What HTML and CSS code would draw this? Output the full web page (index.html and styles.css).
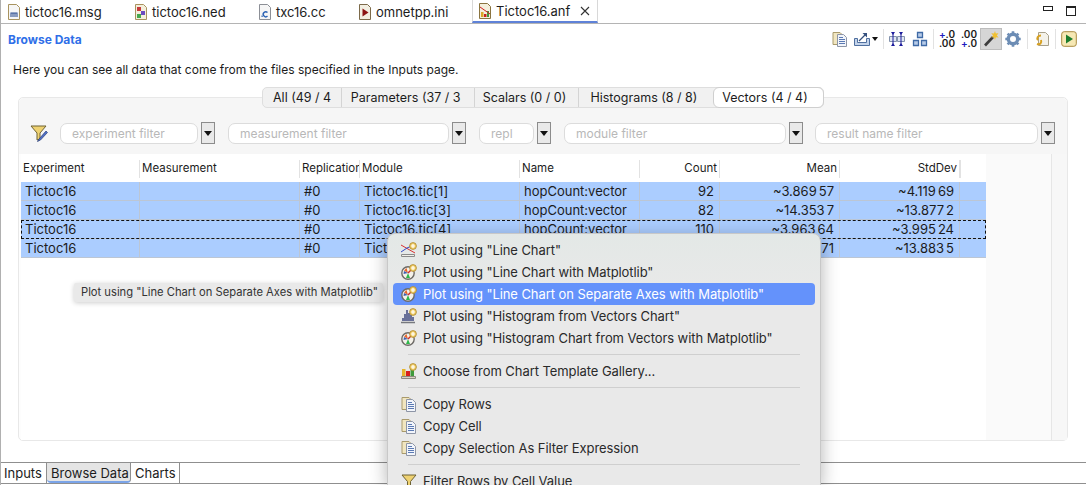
FILE: index.html
```html
<!DOCTYPE html>
<html lang="en">
<head>
  <meta charset="UTF-8" />
  <title>Tictoc16.anf</title>
  <link rel="stylesheet" href="styles.css">
</head>
<body>

  <svg class="defs" width="0" height="0">
    <symbol id="i-copy" viewBox="0 0 16 16">
      <path d="M1 1.5h7l2 2v10H1z" fill="#f1e6c0" stroke="#a99a6c"/>
      <path d="M5.5 3.5h6l3 3v9h-9z" fill="#f2f5fb" stroke="#8d95a6"/>
      <path d="M7 6.5h4M7 8.5h6M7 10.5h6M7 12.5h6" stroke="#5b7ab4"/>
    </symbol>
    <symbol id="i-badge" viewBox="0 0 8 8">
      <circle cx="4" cy="4" r="3.4" fill="#f3d06c" stroke="#a8842a" stroke-width=".8"/>
      <path d="M4 2v4M2 4h4" stroke="#fff" stroke-width="1.2"/>
    </symbol>
    <symbol id="i-matplot" viewBox="0 0 16 16">
      <circle cx="7" cy="9" r="6.2" fill="#f4f1ea" stroke="#6d6a66" stroke-width="1.4"/>
      <path d="M7 9 3 6.5 5.5 4z" fill="#e8672c"/>
      <path d="M7 9 5 14h4z" fill="#2fb84c"/>
      <path d="M7 9 2.5 10 3 7z" fill="#3f5fb0"/>
      <path d="M7 9 11 5" stroke="#d02c2c" stroke-width="1.4"/>
      <use href="#i-badge" x="8" y="0" width="8" height="8"/>
    </symbol>
    <symbol id="i-line" viewBox="0 0 16 16">
      <path d="M0 3 14 11" stroke="#d93030" fill="none"/>
      <path d="M0 10 6 6l7-3" stroke="#3048c8" fill="none"/>
      <path d="M.5 12.5h13v2H.5z" fill="#f0eee8" stroke="#8a8a8a"/>
      <use href="#i-badge" x="8" y="0" width="8" height="8"/>
    </symbol>
    <symbol id="i-hist" viewBox="0 0 16 16">
      <path d="M2 13V10M4 13V6M6 13V2M8 13V5M10 13V7M12 13V9" stroke="#26306e" stroke-width="1.3"/>
      <path d="M0 14.5h14" stroke="#77797e" stroke-width="1.5"/>
      <use href="#i-badge" x="8" y="0" width="8" height="8"/>
    </symbol>
    <symbol id="i-gallery" viewBox="0 0 16 16">
      <path d="M1 6h3.500v7H1z" fill="#e7b52a"/>
      <path d="M5 8h4v5H5z" fill="#d8201c"/>
      <path d="M9.500 4H13v9H9.500z" fill="#3f9a3c"/>
      <path d="M.5 13.500h14v2H.5z" fill="#d8d4c4" stroke="#8c8a80"/>
      <use href="#i-badge" x="8" y="0" width="8" height="8"/>
    </symbol>
  </svg>

  <div class="editor-tabs">
    <div class="editor-tab">
      <svg class="tab-icon" viewBox="1 0 12 16"><path d="M1.500.5h8l3 3v12h-11z" fill="#f6f6f6" stroke="#a8935f"/><path d="M4 13V9h6v4M6 9v4M8 9v4" fill="none" stroke="#2e4f92" stroke-width="1.100"/></svg>
      <span>tictoc16.msg</span>
    </div>
    <div class="editor-tab">
      <svg class="tab-icon" viewBox="1 0 12 16"><path d="M1.500.5h8l3 3v12h-11z" fill="#f4efdc" stroke="#a8935f"/><path d="M3 3h4v4H3z" fill="#c83a3a"/><path d="M7 7h4v4H7z" fill="#6a4cc0"/><path d="M3 10h4v4H3z" fill="#45a84c"/></svg>
      <span>tictoc16.ned</span>
    </div>
    <div class="editor-tab">
      <svg class="tab-icon" viewBox="1 0 12 16"><path d="M1.500.5h8l3 3v12h-11z" fill="#f6f6f6" stroke="#8c8f96"/><path d="M9.500 8.500a2.500 2.500 0 1 0 0 3.600" fill="none" stroke="#2b62b4" stroke-width="1.400"/><path d="M3.500 11.500h1.200v1.500H3.500z" fill="#2b62b4"/></svg>
      <span>txc16.cc</span>
    </div>
    <div class="editor-tab">
      <svg class="tab-icon" viewBox="1 0 12 16"><path d="M1.500.5h8l3 3v12h-11z" fill="#f3efe2" stroke="#7c6a4a"/><path d="M4.500 4.500l6 4-6 4z" fill="#8c1414"/></svg>
      <span>omnetpp.ini</span>
    </div>
    <div class="editor-tab active">
      <svg class="tab-icon" viewBox="1 0 12 16"><path d="M1.500.5h8l3 3v12h-11z" fill="#f4efdc" stroke="#8a7440"/><path d="M3 9h2.500v5H3z" fill="#d8a828"/><path d="M6 11h2.500v3H6z" fill="#c82020"/><path d="M9 8h2v6H9z" fill="#3f9a3c"/><path d="M2 4l10 7" stroke="#d02020"/></svg>
      <span>Tictoc16.anf</span>
      <svg class="tab-close" viewBox="0 0 10 10"><path d="M1 1l8 8M9 1 1 9" stroke="#333" stroke-width="1.100"/></svg>
    </div>
    <div class="window-btns">
      <span class="win-min"></span>
      <span class="win-max"></span>
    </div>
  </div>

  <div class="page-head">
    <div class="page-title">Browse Data</div>
    <div class="toolbar">
      <svg class="tool"><use href="#i-copy"/></svg>
      <svg class="tool tool-export" viewBox="0 0 18 16"><path d="M1.500 7.500h3v4h9v-4h3v7h-15z" fill="#c3d3ea" stroke="#4f6f9f"/><path d="M6 10 13 3" stroke="#36507e" stroke-width="1.300"/><path d="M9.500 2H14v4.500z" fill="#36507e"/></svg>
      <span class="tool-arrow"></span>
      <span class="tool-sep"></span>
      <svg class="tool" viewBox="0 0 16 16"><path d="M.5 5.500h7v5h-7zM8.500 5.500h7v5h-7z" fill="#dfe6f2" stroke="#8392ac"/><path d="M2 1h4L4 4zM10 1h4l-2 3zM2 15h4l-2-3zM10 15h4l-2-3z" fill="#1c1c9c"/><path d="M4 1v14M12 1v14" stroke="#1c1c9c"/></svg>
      <svg class="tool tool-tree" viewBox="0 0 16 16"><path d="M5.500 1.500h5v5h-5zM1.500 9.500h5v5h-5zM9.500 9.500h5v5h-5z" fill="#b7cbe8" stroke="#3f6aa6" stroke-width="1.300"/></svg>
      <span class="tool-sep"></span>
      <span class="tool-num first"><b><em>+</em>.0</b><b>.00</b></span>
      <span class="tool-num"><b>.00</b><b><em>+</em>.0</b></span>
      <span class="tool-on">
        <svg class="tool" viewBox="0 0 16 16"><path d="M2 14.500 10 6" stroke="#3c3c3c" stroke-width="2.600"/><path d="M12 0l.8 2.500 2.700-.3-1.700 2.200 1.700 2.200-2.700-.3L12 9l-1-2.700-2.700.3 1.800-2.200-1.800-2.200 2.700.3z" fill="#f0c030"/></svg>
      </span>
      <svg class="tool tool-gear" viewBox="0 0 16 16"><circle cx="8" cy="8" r="4.700" fill="none" stroke="#6d8db5" stroke-width="3.400"/><path d="M8 .3v3M8 12.700v3M.3 8h3M12.700 8h3M2.600 2.600l2.100 2.100M11.300 11.300l2.100 2.100M13.400 2.600l-2.100 2.100M4.700 11.300l-2.100 2.100" stroke="#6d8db5" stroke-width="2.600"/></svg>
      <span class="tool-sep"></span>
      <svg class="tool tool-refresh" viewBox="0 0 16 16"><path d="M4.500 1.500h7l3 3v10h-10z" fill="#f4f2ea" stroke="#a8a08a"/><path d="M7 4.500C3.500 4.500 2.500 7.500 4 9M3 13c3 1 5-1 4-4" fill="none" stroke="#d8a020" stroke-width="2"/></svg>
      <span class="tool-sep"></span>
      <svg class="tool" viewBox="0 0 16 16"><rect x=".7" y=".7" width="14.600" height="14.600" rx="2.500" fill="#f6e8b4" stroke="#a88a40"/><path d="M5 3.500l7 4.500-7 4.500z" fill="#1c7c2c"/></svg>
    </div>
  </div>

  <p class="page-help">Here you can see all data that come from the files specified in the Inputs page.</p>

  <div class="panel">
    <div class="panel-top">
      <div class="folder-tabs">
        <div class="folder-tab seg-all">All (49 / 4</div>
        <div class="folder-tab seg-par">Parameters (37 / 3</div>
        <div class="folder-tab seg-sca">Scalars (0 / 0)</div>
        <div class="folder-tab seg-his">Histograms (8 / 8)</div>
        <div class="folder-tab seg-vec">Vectors (4 / 4)</div>
      </div>
      <div class="filters">
        <svg class="filter-icon" viewBox="0 0 18 18"><path d="M1 2h15l-6 7v6l-3 1V9z" fill="#efd272" stroke="#6e6232"/><path d="M16 7 9 15l-1.500 2.500L10.500 16l7-7.500z" fill="#4f70c8" stroke="#2c3f78" stroke-width=".7"/></svg>
        <div class="filter f-exp"><span class="filter-input">experiment filter</span><span class="filter-drop"></span></div>
        <div class="filter f-mea"><span class="filter-input">measurement filter</span><span class="filter-drop"></span></div>
        <div class="filter f-rep"><span class="filter-input">repl</span><span class="filter-drop"></span></div>
        <div class="filter f-mod"><span class="filter-input">module filter</span><span class="filter-drop"></span></div>
        <div class="filter f-res"><span class="filter-input">result name filter</span><span class="filter-drop"></span></div>
      </div>
    </div>

    <div class="panel-body">
      <div class="table">
        <div class="row head">
          <div>Experiment</div><div>Measurement</div><div>Replication</div><div>Module</div><div>Name</div>
          <div class="num">Count</div><div class="num">Mean</div><div class="num">StdDev</div><div class="end"></div>
        </div>
        <div class="row sel">
          <div>Tictoc16</div><div></div><div>#0</div><div>Tictoc16.tic[1]</div><div>hopCount:vector</div>
          <div class="num">92</div><div class="num">~3.869<i>57</i></div><div class="num">~4.119<i>69</i></div><div class="end"></div>
        </div>
        <div class="row sel">
          <div>Tictoc16</div><div></div><div>#0</div><div>Tictoc16.tic[3]</div><div>hopCount:vector</div>
          <div class="num">82</div><div class="num">~14.353<i>7</i></div><div class="num">~13.877<i>2</i></div><div class="end"></div>
        </div>
        <div class="row sel focus">
          <div>Tictoc16</div><div></div><div>#0</div><div>Tictoc16.tic[4]</div><div>hopCount:vector</div>
          <div class="num">110</div><div class="num">~3.963<i>64</i></div><div class="num">~3.995<i>24</i></div><div class="end"></div>
        </div>
        <div class="row sel">
          <div>Tictoc16</div><div></div><div>#0</div><div>Tict</div><div></div>
          <div class="num"></div><div class="num">71</div><div class="num">~13.883<i>5</i></div><div class="end"></div>
        </div>
      </div>
      <div class="panel-fill"></div>
      <div class="panel-scroll"></div>
    </div>
  </div>

  <div class="page-tabs">
    <div class="page-tab">Inputs</div>
    <div class="page-tab active">Browse Data</div>
    <div class="page-tab">Charts</div>
  </div>

  <div class="tooltip">Plot using "Line Chart on Separate Axes with Matplotlib"</div>

  <div class="menu">
    <div class="menu-item"><svg class="menu-icon"><use href="#i-line"/></svg>Plot using "Line Chart"</div>
    <div class="menu-item"><svg class="menu-icon"><use href="#i-matplot"/></svg>Plot using "Line Chart with Matplotlib"</div>
    <div class="menu-item hover"><svg class="menu-icon"><use href="#i-matplot"/></svg>Plot using "Line Chart on Separate Axes with Matplotlib"</div>
    <div class="menu-item"><svg class="menu-icon"><use href="#i-hist"/></svg>Plot using "Histogram from Vectors Chart"</div>
    <div class="menu-item"><svg class="menu-icon"><use href="#i-matplot"/></svg>Plot using "Histogram Chart from Vectors with Matplotlib"</div>
    <div class="menu-sep"></div>
    <div class="menu-item"><svg class="menu-icon"><use href="#i-gallery"/></svg>Choose from Chart Template Gallery...</div>
    <div class="menu-sep"></div>
    <div class="menu-item"><svg class="menu-icon"><use href="#i-copy"/></svg>Copy Rows</div>
    <div class="menu-item"><svg class="menu-icon"><use href="#i-copy"/></svg>Copy Cell</div>
    <div class="menu-item"><svg class="menu-icon"><use href="#i-copy"/></svg>Copy Selection As Filter Expression</div>
    <div class="menu-sep"></div>
    <div class="menu-item"><svg class="menu-icon" viewBox="0 0 16 16"><path d="M1 2h14L9.500 8.500V15h-3V8.500z" fill="#efd272" stroke="#6e6232"/></svg>Filter Rows by Cell Value</div>
  </div>

</body>
</html>
```

FILE: styles.css
```css
* {
  margin: 0;
  padding: 0;
  box-sizing: border-box;
}

html, body {
  height: 485px;
  overflow: hidden;
}

body {
  position: relative;
  font-family: Inter, "Liberation Sans", sans-serif;
  font-size: 13px;
  color: #1c1c1c;
  background: #fff;
  border-left: 1px solid #b0b0b0;
}

.defs {
  position: absolute;
}

/* editor tabs */
.editor-tabs {
  display: flex;
  height: 24px;
  border-bottom: 1px solid #b4b4b4;
  margin-left: -1px;
}

.editor-tab {
  display: flex;
  align-items: center;
  gap: 5px;
  height: 23px;
  padding-left: 8px;
  font-size: 13px;
}

.editor-tab:nth-child(1) { width: 127px; }
.editor-tab:nth-child(2) { width: 124px; }
.editor-tab:nth-child(3) { width: 100px; }
.editor-tab:nth-child(4) { width: 121px; }

.editor-tab.active {
  width: 126px;
  padding-left: 6px;
  border-bottom: 2px solid #5f82d8;
  border-left: 1px solid #d8d8d8;
  border-right: 1px solid #d8d8d8;
}

.tab-icon {
  width: 12px;
  height: 16px;
  flex: none;
}

.tab-close {
  width: 10px;
  height: 10px;
  margin-left: 5px;
}

.window-btns {
  display: flex;
  gap: 13px;
  margin-left: auto;
  padding: 6px 10px 0 0;
}

.win-min {
  width: 10px;
  height: 5px;
  border: 1px solid #222;
}

.win-max {
  width: 10px;
  height: 10px;
  border: 1px solid #222;
  border-top-width: 2px;
}

/* title and toolbar */
.page-head {
  display: flex;
  align-items: center;
  justify-content: space-between;
  height: 30px;
  padding: 0 9px 0 7px;
}

.page-title {
  font-size: 12px;
  font-weight: 700;
  color: #2f6fe8;
}

.toolbar {
  display: flex;
  align-items: center;
}

.tool {
  width: 16px;
  height: 16px;
  flex: none;
}

.tool-export {
  width: 18px;
  margin-left: 5px;
}

.tool-tree {
  margin-left: 7px;
}

.tool-gear {
  margin: 0 1px 0 3px;
}

.tool-refresh {
  margin-left: 1px;
}

.tool-arrow {
  width: 0;
  height: 0;
  margin-left: 1px;
  border-left: 3px solid transparent;
  border-right: 3px solid transparent;
  border-top: 4px solid #111;
}

.tool-sep {
  width: 1px;
  height: 20px;
  margin: 0 5px;
  background: #e2e2e2;
}

.tool-num {
  display: flex;
  flex-direction: column;
  align-items: center;
  width: 22px;
  font-size: 10px;
  line-height: 9px;
}

.tool-num.first {
  margin-left: -3px;
}

.tool-num b {
  font-weight: 600;
}

.tool-num em {
  font-style: normal;
  color: #1c1cc0;
}

.tool-on {
  display: flex;
  align-items: center;
  justify-content: center;
  width: 22px;
  height: 22px;
  background: #d6d6d6;
  border: 1px solid #bdbdbd;
}

.page-help {
  padding: 9px 0 0 12px;
  height: 33px;
  font-size: 12px;
  line-height: 14px;
}

/* the big panel */
.panel {
  width: 1050px;
  height: 344px;
  margin: 10px 0 0 17px;
  background: #fdfdfd;
  border: 1px solid #e8e8e8;
  border-radius: 5px;
}

.panel-top {
  display: flow-root;
  height: 56px;
  background: #f6f6f6;
  border-radius: 5px 5px 0 0;
}

.folder-tabs {
  display: flex;
  width: 562px;
  height: 21px;
  margin: -11px 0 0 243px;
  background: #f1f1f1;
  border: 1px solid #dedede;
  border-radius: 5px;
  font-size: 12.5px;
  line-height: 19px;
}

.folder-tab {
  white-space: nowrap;
  padding-left: 10px;
  border-right: 1px solid #d4d4d4;
  overflow: hidden;
}

.seg-all { width: 79px; }
.seg-par { width: 133px; padding-left: 9px; }
.seg-sca { width: 105px; padding-left: 8px; }
.seg-his { width: 134px; padding-left: 11px; border-right: 0; }

.seg-vec {
  width: 111px;
  padding-left: 8px;
  background: #fff;
  border: 1px solid #cfcfcf;
  border-radius: 6px;
  margin: -1px -1px -1px 0;
}

.filters {
  display: flex;
  align-items: center;
  height: 24px;
  margin-top: 13px;
  padding-left: 11px;
}

.filter-icon {
  width: 18px;
  height: 18px;
  flex: none;
  margin-right: 12px;
}

.filter {
  display: flex;
  align-items: center;
  gap: 3px;
}

.f-exp { width: 155px; margin-right: 13px; }
.f-mea { width: 238px; margin-right: 13px; }
.f-rep { width: 72px; margin-right: 13px; }
.f-mod { width: 239px; margin-right: 12px; }
.f-res { width: 240px; }

.filter-input {
  flex: 1;
  height: 21px;
  padding-left: 11px;
  font-size: 12px;
  line-height: 20px;
  color: #b8b8b8;
  background: #fff;
  border: 1px solid #dcdcdc;
  border-radius: 7px;
}

.filter-drop {
  position: relative;
  flex: none;
  width: 14px;
  height: 22px;
  background: #e9e9e9;
  border: 1px solid #8c8c8c;
}

.filter-drop::after {
  content: "";
  position: absolute;
  left: 2px;
  top: 8px;
  border-left: 4px solid transparent;
  border-right: 4px solid transparent;
  border-top: 5px solid #111;
}

.panel-body {
  display: flex;
  height: 286px;
  padding-left: 2px;
}

/* table */
.table {
  width: 965px;
  flex: none;
  background: #fff;
}

.row {
  display: grid;
  grid-template-columns: 119px 160px 60px 160px 120px 80px 120px 120px 26px;
  height: 19px;
  line-height: 18px;
  white-space: nowrap;
}

.row > div {
  padding: 0 5px 0 4px;
  overflow: hidden;
  border-right: 1px solid #bcc6d4;
}

.row > .num {
  text-align: right;
}

.row > .end {
  border-right: 0;
}

.row i {
  font-style: normal;
  margin-left: 2px;
}

.head {
  height: 28px;
  padding-top: 6px;
  font-size: 11.5px;
  line-height: 17px;
}

.head > div {
  height: 18px;
  padding: 0 2px;
  border-right-color: #e2e2e2;
}

.head > .end {
  border-left: 1px solid #e2e2e2;
  margin-right: 15px;
}

.sel {
  background: #abcdff;
  border-bottom: 1px solid #bcc6d4;
}

.focus {
  outline: 1px dashed #111;
  outline-offset: -1px;
}

.panel-fill {
  width: 65px;
  flex: none;
  background: #fafafa;
}

.panel-scroll {
  flex: 1;
  background: #f7f7f7;
  border-left: 1px solid #e6e6e6;
}

/* bottom tabs */
.page-tabs {
  display: flex;
  height: 22px;
  margin-top: 21px;
  margin-left: -1px;
  border-top: 1px solid #8f8f8f;
  border-bottom: 1px solid #8f8f8f;
  font-size: 13px;
  line-height: 20px;
  white-space: nowrap;
}

.page-tab {
  padding-left: 4px;
  border-right: 1px solid #8f8f8f;
}

.page-tab:first-child {
  width: 47px;
}

.page-tab.active {
  width: 84px;
  background: #e4e4e4;
  border-bottom: 2px solid #7ba4e8;
  border-radius: 0 0 4px 4px;
}

.page-tab:last-child {
  width: 49px;
}

/* popups over the page */
.tooltip {
  position: absolute;
  left: 73px;
  top: 283px;
  width: 309px;
  height: 19px;
  padding-left: 7px;
  font-size: 11.2px;
  line-height: 18px;
  white-space: nowrap;
  color: #333;
  background: #e9e9e9;
  border-radius: 2px;
  box-shadow: 0 1px 5px rgba(0, 0, 0, 0.2);
}

.menu {
  position: absolute;
  left: 386px;
  top: 233px;
  width: 434px;
  height: 252px;
  padding: 5px;
  overflow: hidden;
  background: linear-gradient(#e3e8e6, #e9e9e9 60px);
  border: 1px solid #c8c8c8;
  border-bottom: 0;
  border-radius: 8px 8px 0 0;
  box-shadow: 0 4px 18px rgba(0, 0, 0, 0.3);
}

.menu-item {
  display: flex;
  align-items: center;
  height: 22px;
  padding-left: 8px;
  color: #2a2a2a;
  letter-spacing: -0.07px;
  border-radius: 4px;
  white-space: nowrap;
}

.menu-item.hover {
  color: #fff;
  background: #6492fb;
}

.menu-icon {
  width: 16px;
  height: 16px;
  flex: none;
  margin-right: 6px;
}

.menu-sep {
  height: 1px;
  margin: 5px 15px;
  background: #cfcfcf;
}
```
